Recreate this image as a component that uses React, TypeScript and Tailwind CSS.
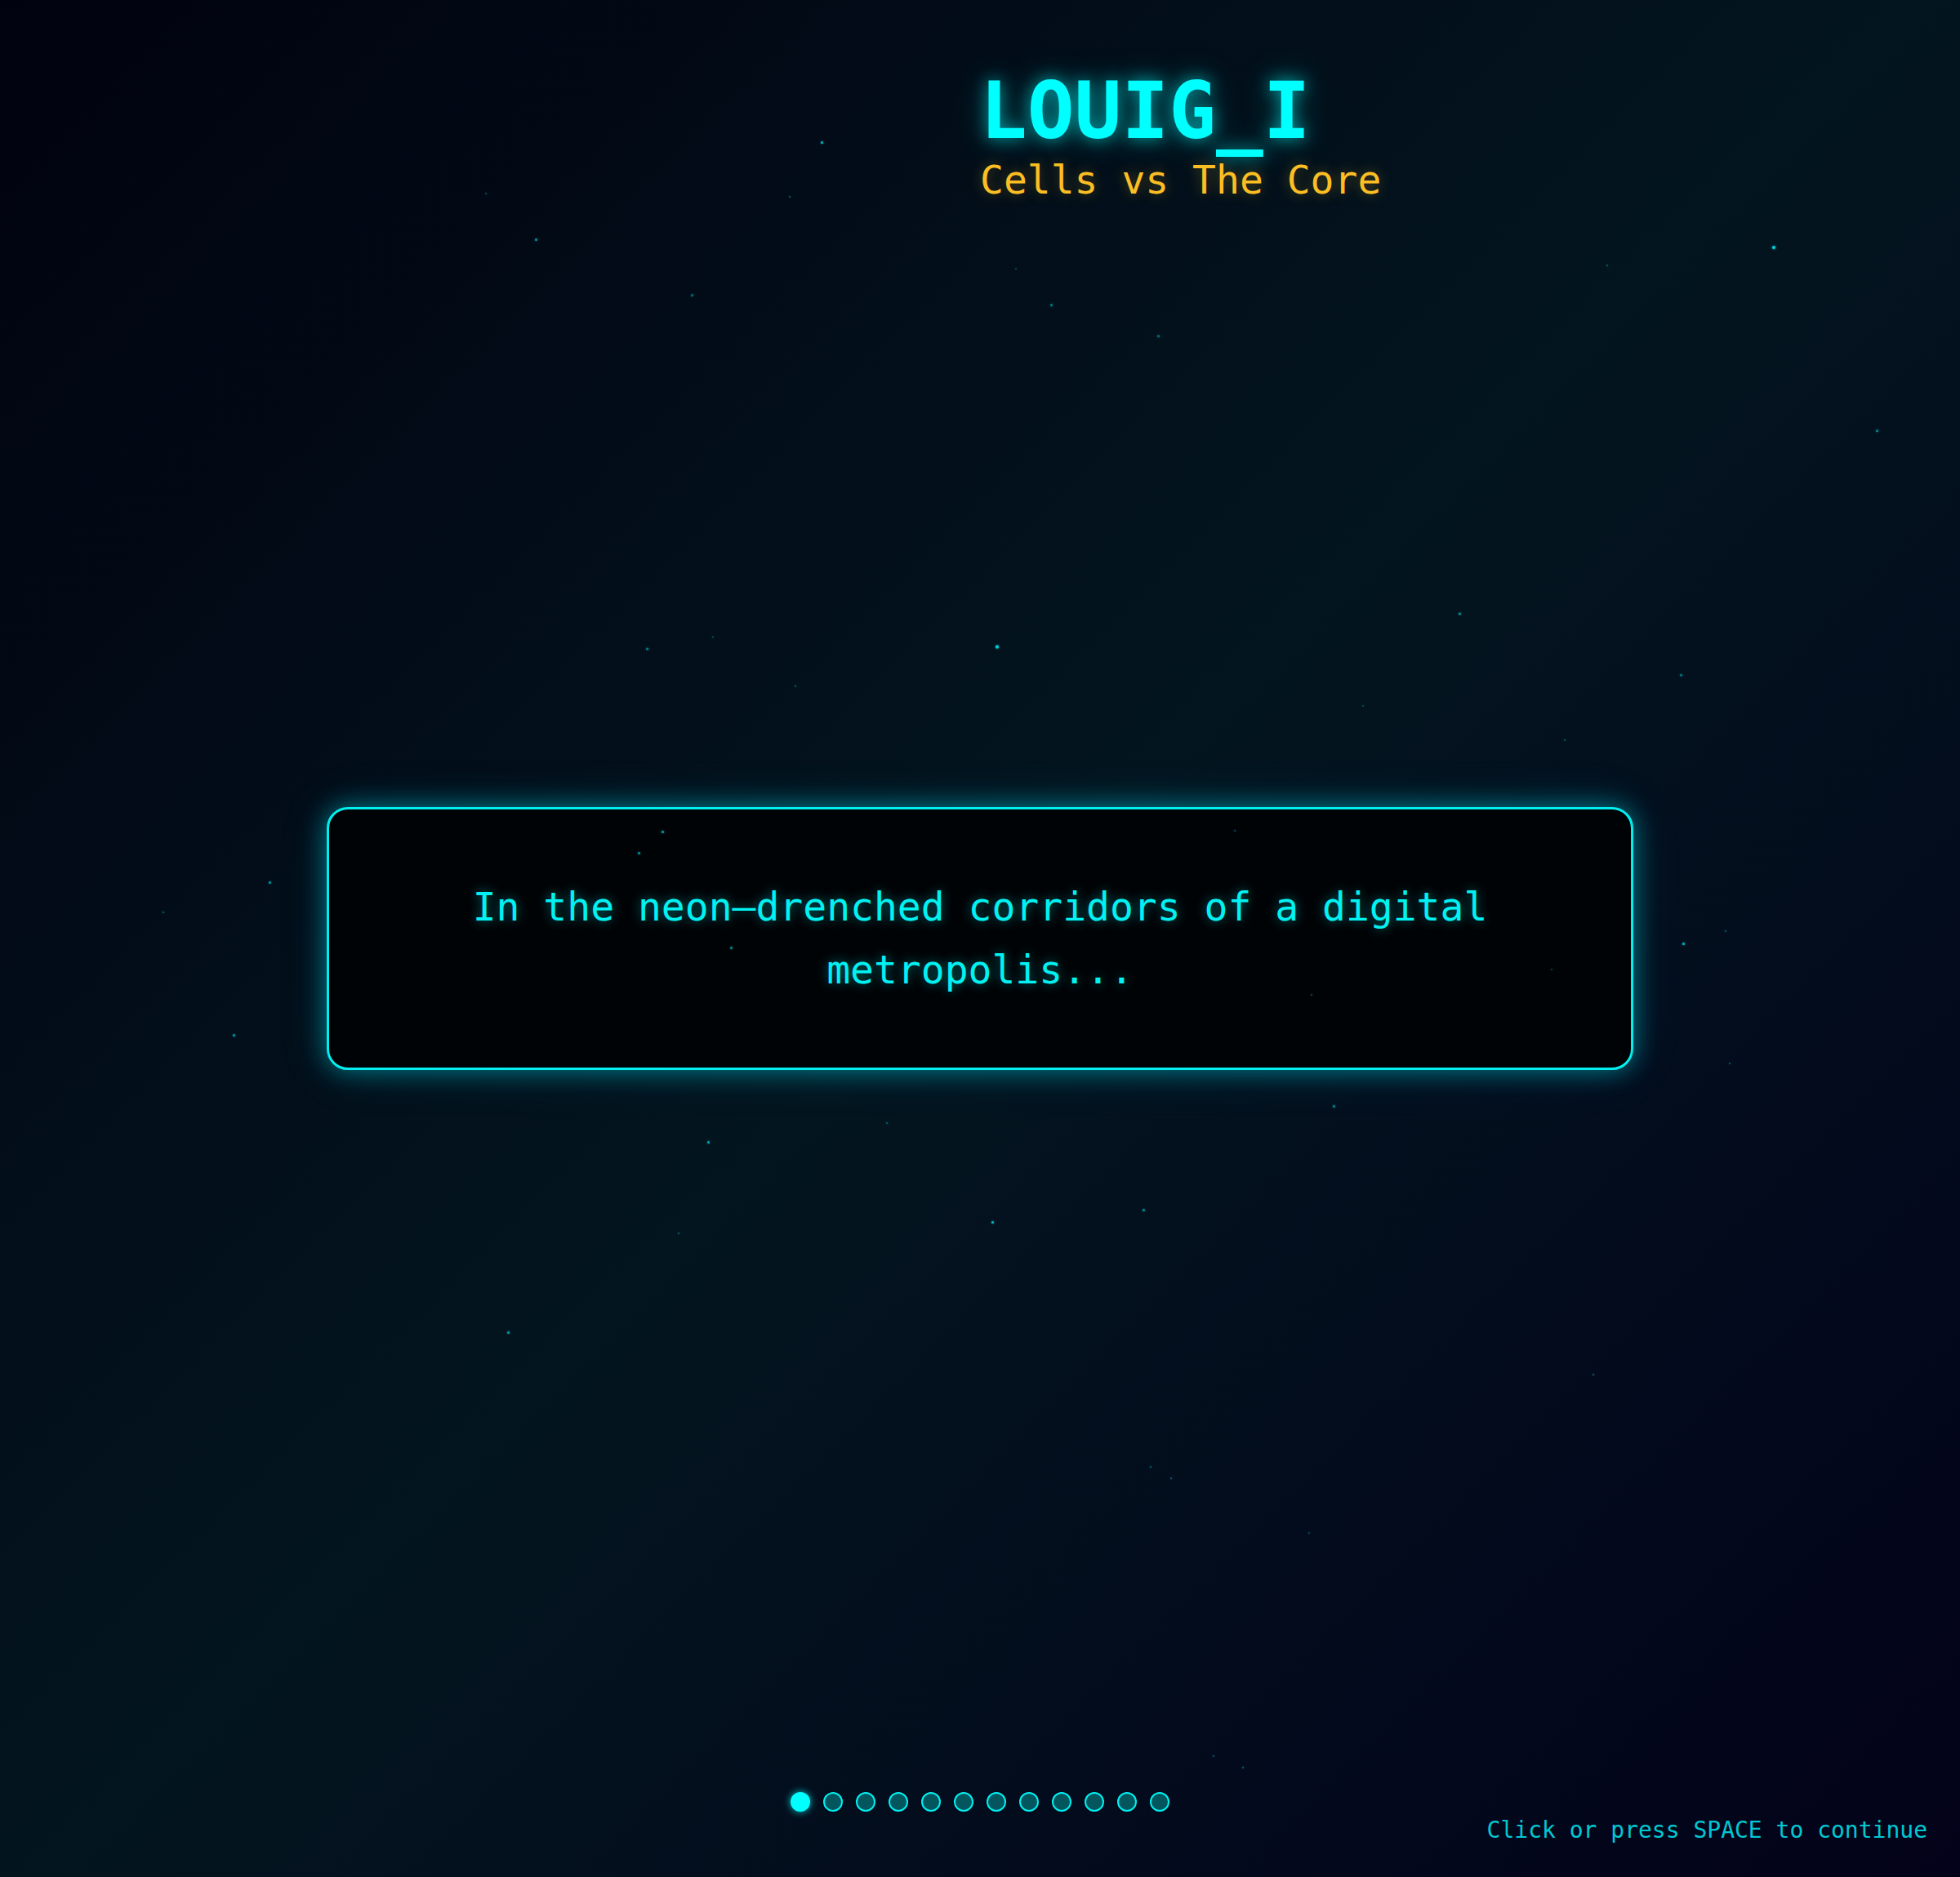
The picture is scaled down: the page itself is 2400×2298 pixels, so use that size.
import React from 'react';

// star field: [x, y, size, opacity]
const stars: [number, number, number, number][] = [
  [1005, 173, 3, 0.8], [966, 240, 2, 0.4], [594, 236, 2, 0.35], [655, 292, 3, 0.65],
  [846, 360, 3, 0.45], [1286, 372, 3, 0.5], [1417, 410, 3, 0.45], [1243, 328, 2, 0.3],
  [2170, 301, 4, 0.9], [1967, 324, 2, 0.4], [2297, 526, 3, 0.6], [1786, 750, 3, 0.6],
  [2057, 825, 3, 0.5], [1219, 790, 4, 0.9], [791, 793, 3, 0.55], [872, 779, 2, 0.3],
  [973, 839, 2, 0.35], [1668, 863, 2, 0.3], [1915, 905, 2, 0.35], [810, 1017, 3, 0.7],
  [781, 1043, 3, 0.65], [1511, 1016, 2, 0.4], [329, 1079, 3, 0.65], [199, 1116, 2, 0.45],
  [894, 1159, 3, 0.6], [2060, 1154, 3, 0.8], [2112, 1139, 2, 0.4], [1899, 1186, 2, 0.3],
  [1605, 1217, 2, 0.35], [285, 1266, 3, 0.65], [2117, 1301, 2, 0.4], [1632, 1353, 3, 0.55],
  [1085, 1374, 2, 0.4], [866, 1397, 3, 0.7], [1399, 1480, 3, 0.6], [1214, 1495, 3, 0.8],
  [830, 1509, 2, 0.4], [621, 1630, 3, 0.65], [1950, 1682, 2, 0.45], [1408, 1795, 2, 0.4],
  [1433, 1809, 2, 0.45], [1602, 1876, 2, 0.3], [1485, 2149, 2, 0.4], [1521, 2163, 2, 0.45],
];

const TOTAL = 12;

export default function App() {
  return (
    <div className="relative grid h-screen w-full grid-rows-[1fr_auto_1fr] overflow-hidden bg-[linear-gradient(135deg,#01020f_0%,#03151f_50%,#03021a_100%)] font-['DejaVu_Sans_Mono',monospace]">
      {/* header */}
      <header className="self-start pl-[50%] pt-[88px]">
        <h1 className="text-[96px] font-bold leading-[96px] text-[#00ffff] [text-shadow:0_0_20px_rgba(0,255,255,0.6),0_0_44px_rgba(0,255,255,0.3)]">
          LOUIG_I
        </h1>
        <p className="text-[48px] leading-[72px] text-[#fbbf24] [text-shadow:0_0_16px_rgba(251,191,36,0.35)]">
          Cells vs The Core
        </p>
      </header>

      {/* story panel */}
      <main className="flex justify-center">
        <div className="w-[1600px] rounded-[26px] border-[3px] border-[#00f0f0] bg-[#000306] px-16 py-[81px] shadow-[0_0_30px_rgba(0,240,255,0.45),0_0_60px_rgba(0,200,255,0.15)]">
          <p className="text-center text-[48px] leading-[1.6] text-[#00f2f2] [text-shadow:0_0_14px_rgba(0,255,255,0.45)]">
            In the neon–drenched corridors of a digital metropolis...
          </p>
        </div>
      </main>

      {/* progress + hint */}
      <footer className="flex flex-col justify-end pb-[36px]">
        <div className="flex justify-center gap-4">
          {Array.from({ length: TOTAL }).map((_, i) =>
            i === 0 ? (
              <span key={i} className="h-6 w-6 rounded-full bg-[#00ffff] shadow-[0_0_10px_rgba(0,255,255,0.8)]" />
            ) : (
              <span key={i} className="h-6 w-6 rounded-full border-2 border-[#00f0f0] bg-[#03565e]" />
            )
          )}
        </div>
        <div className="mt-[2px] self-end pr-[40px] text-[28px] leading-[1.5] text-[#00c8d2]">
          Click or press SPACE to continue
        </div>
      </footer>

      {/* stars */}
      <div className="pointer-events-none absolute inset-0">
        {stars.map(([x, y, s, o], i) => (
          <span
            key={i}
            className="absolute rounded-full bg-[#00e5ee] shadow-[0_0_3px_rgba(0,229,238,0.8)]"
            style={{ left: x, top: y, width: s, height: s, opacity: o }}
          />
        ))}
      </div>
    </div>
  );
}
